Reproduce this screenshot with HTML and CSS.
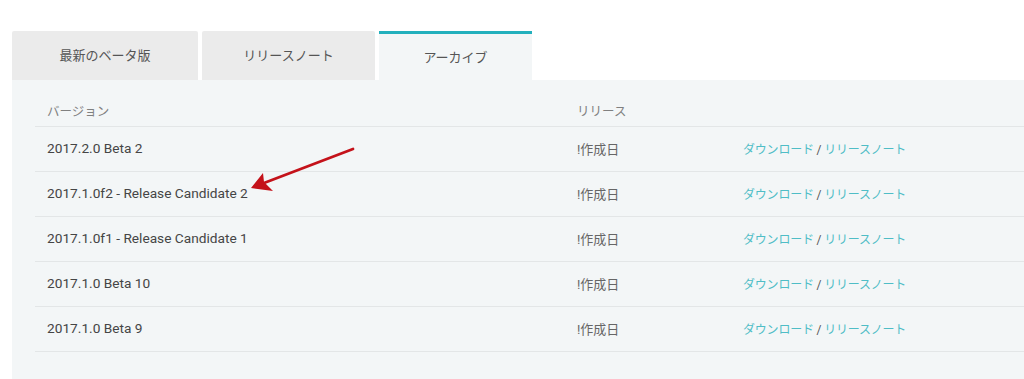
FILE: index.html
```html
<!DOCTYPE html>
<html lang="ja">
<head>
<meta charset="utf-8">
<link rel="stylesheet" href="styles.css">
</head>
<body>
<div class="page">
  <div class="tabs">
    <div class="tab t1">最新のベータ版</div>
    <div class="tab t2">リリースノート</div>
    <div class="tab t3 active">アーカイブ</div>
  </div>
  <div class="panel">
    <table class="tbl">
      <thead>
        <tr><th class="c1">バージョン</th><th class="c2">リリース</th><th class="c3"></th></tr>
      </thead>
      <tbody>
        <tr><td class="c1">2017.2.0 Beta 2</td><td class="c2">!作成日</td><td class="c3"><a>ダウンロード</a> / <a>リリースノート</a></td></tr>
        <tr><td class="c1">2017.1.0f2 - Release Candidate 2</td><td class="c2">!作成日</td><td class="c3"><a>ダウンロード</a> / <a>リリースノート</a></td></tr>
        <tr><td class="c1">2017.1.0f1 - Release Candidate 1</td><td class="c2">!作成日</td><td class="c3"><a>ダウンロード</a> / <a>リリースノート</a></td></tr>
        <tr><td class="c1">2017.1.0 Beta 10</td><td class="c2">!作成日</td><td class="c3"><a>ダウンロード</a> / <a>リリースノート</a></td></tr>
        <tr><td class="c1">2017.1.0 Beta 9</td><td class="c2">!作成日</td><td class="c3"><a>ダウンロード</a> / <a>リリースノート</a></td></tr>
      </tbody>
    </table>
  </div>
  <svg class="arrow" width="120" height="50" viewBox="0 0 120 50">
    <path d="M103 2 L14 36" stroke="#c4121a" stroke-width="2.8" stroke-linecap="round" fill="none"/>
    <path d="M1 41 L13 26 L14 35 L23 44 Z" fill="#c4121a"/>
  </svg>
</div>
</body>
</html>
```
FILE: styles.css
```css
html, body {
  margin: 0;
  padding: 0;
  background: #ffffff;
}
.page {
  position: relative;
  padding: 31px 0 0 12px;
  height: 348px;
  font-family: Roboto, "Noto Sans CJK JP", sans-serif;
  overflow: hidden;
}
.tabs {
  display: flex;
  gap: 4px;
  align-items: flex-end;
}
.tab {
  height: 49px;
  display: flex;
  align-items: center;
  justify-content: center;
  padding-bottom: 2px;
  background: #ebebeb;
  color: #555;
  font-size: 13px;
  border-radius: 2px 2px 0 0;
  box-sizing: border-box;
}
.t1 { width: 186px; }
.t2 { width: 173px; }
.t3 { width: 153px; }
.tab.active {
  background: #f3f6f7;
  border-top: 3px solid #22b0bd;
  border-radius: 0;
}
.panel {
  background: #f3f6f7;
  height: 299px;
  padding: 16px 0 0 23px;
  box-sizing: border-box;
}
.tbl {
  width: 100%;
  border-collapse: collapse;
}
.tbl th {
  text-align: left;
  font-weight: 400;
  color: #808080;
  font-size: 12.5px;
  height: 28px;
  padding: 0 0 2px 12px;
  border-bottom: 1px solid #e3e6e7;
  vertical-align: middle;
}
.tbl td {
  height: 42px;
  padding: 0 0 2px 12px;
  border-bottom: 1px solid #e3e6e7;
  font-size: 13px;
  color: #555;
  vertical-align: middle;
}
.tbl td.c1 {
  font-size: 13.7px;
  color: #454545;
}
.tbl td.c2 {
  color: #666;
}
.c1 { width: 518px; }
.c2 { width: 154px; }
.tbl td.c3 {
  color: #555;
  font-size: 12px;
  letter-spacing: -0.2px;
}
.tbl a {
  color: #4fbdc6;
  text-decoration: none;
}
.arrow {
  position: absolute;
  left: 250px;
  top: 147px;
}
```
